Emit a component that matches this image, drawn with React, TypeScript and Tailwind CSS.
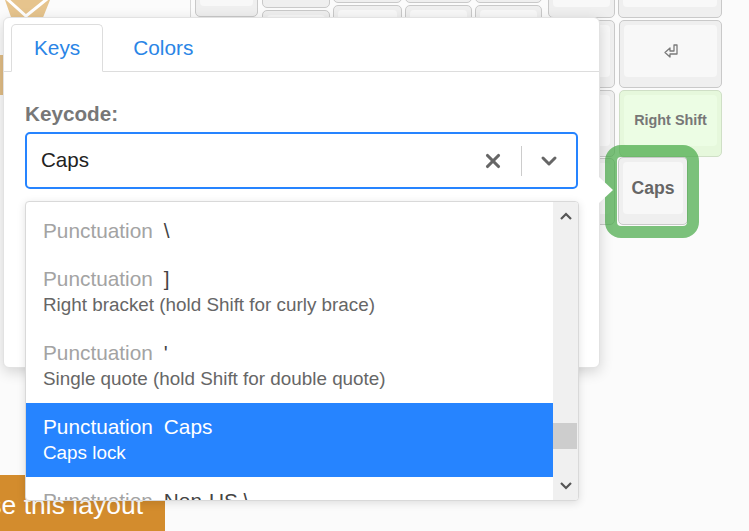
import { X, ChevronDown } from "lucide-react"

type Key = {
  x: number
  y: number
  w: number
  h: number
  label?: string
  kind?: "shift" | "caps" | "enter"
}

const keys: Key[] = [
  { x: 195, y: -50, w: 63, h: 67 },
  { x: 262, y: -59, w: 68, h: 67 },
  { x: 262, y: 10, w: 68, h: 67 },
  { x: 333, y: -64, w: 69, h: 67 },
  { x: 333, y: 5, w: 69, h: 67 },
  { x: 405, y: -64, w: 67, h: 67 },
  { x: 405, y: 5, w: 67, h: 67 },
  { x: 475, y: -64, w: 67, h: 67 },
  { x: 475, y: 5, w: 67, h: 67 },
  { x: 548, y: -49, w: 67, h: 67 },
  { x: 548, y: 20, w: 67, h: 68 },
  { x: 548, y: 90, w: 67, h: 67 },
  { x: 548, y: 158, w: 67, h: 67 },
  { x: 618, y: -49, w: 104, h: 67 },
  { x: 619, y: 20, w: 103, h: 68, kind: "enter" },
  { x: 619, y: 90, w: 103, h: 67, label: "Right Shift", kind: "shift" },
  { x: 618, y: 157, w: 70, h: 68, label: "Caps", kind: "caps" },
]

const options = [
  { title: "\\", desc: "", first: true },
  { title: "]", desc: "Right bracket (hold Shift for curly brace)" },
  { title: "'", desc: "Single quote (hold Shift for double quote)" },
  { title: "Caps", desc: "Caps lock", selected: true },
  { title: "Non-US \\", desc: "Non-US backslash" },
]

function KeyCap({ k }: { k: Key }) {
  const shift = k.kind === "shift"
  return (
    <div
      className={`absolute rounded-[5px] border ${shift ? "border-[#cfdfc6] bg-[#e6f8dc]" : "border-[#c9c9c9] bg-[#efefef]"}`}
      style={{ left: k.x, top: k.y, width: k.w, height: k.h }}
    >
      <div
        className={`absolute left-[4px] right-[4px] top-[4px] bottom-[10px] rounded-[4px] flex items-center justify-center ${shift ? "bg-[#ecfde4]" : "bg-[#f8f8f8]"}`}
      >
        {k.kind === "enter" && (
          <svg width="16" height="16" viewBox="0 0 16 16">
            <path
              d="M11 2 H14 V11 H7 V14 L2 9.5 L7 5 V8 H11 Z"
              fill="none"
              stroke="#7a7a7a"
              strokeWidth="1.3"
              strokeLinejoin="round"
            />
          </svg>
        )}
        {k.kind === "shift" && <span className="text-[14.4px] font-bold text-[#777]">{k.label}</span>}
        {k.kind === "caps" && <span className="text-[17.6px] font-bold text-[#666]">{k.label}</span>}
      </div>
    </div>
  )
}

export default function App() {
  return (
    <div
      className="relative flex h-[531px] w-[749px] flex-col overflow-hidden bg-[#fbfbfb]"
      style={{ fontFamily: '"Liberation Sans", Arial, sans-serif' }}
    >
      {/* keyboard canvas */}
      <div className="relative h-[475px] w-full shrink-0">
        <svg width="52" height="20" viewBox="0 0 52 20" className="absolute left-0 top-0">
          <polygon points="5,0 50,0 42,20 12,20" fill="#e6c48d" />
          <path d="M7 -1 L26 16 L47 -1" fill="none" stroke="#ffffff" strokeWidth="3" />
        </svg>
        <div className="absolute left-0 top-[55px] h-[40px] w-[3px] bg-[#e2be86]" />
        <div className="absolute left-[190px] top-0 h-[17px] w-px bg-[#d8d8d8]" />
        {keys.map((k, i) => (
          <KeyCap key={i} k={k} />
        ))}
        {/* highlight ring round the selected key */}
        <div className="absolute left-[605px] top-[145px] h-[93px] w-[94px] rounded-[16px] border-[12px] border-[rgba(74,170,74,0.72)]" />
      </div>

      <div className="flex h-[62px] w-[165px] shrink-0 items-center justify-end overflow-hidden bg-[#d38c2d] pr-[22px]">
        <span className="whitespace-nowrap text-[26.5px] text-white">Use this layout</span>
      </div>

      {/* popover */}
      <div className="absolute left-[3px] top-[17px] h-[351px] w-[597px] rounded-[6px] border border-[#e2e2e2] bg-white shadow-[0_4px_14px_rgba(0,0,0,0.16)]">
        <div className="absolute right-[-14px] top-[159px] h-0 w-0 border-y-[13px] border-l-[14px] border-y-transparent border-l-white" />

        <div className="flex gap-[8px] border-b border-[#dddddd] px-[7px] pt-[6px]">
          <div className="-mb-px flex h-[48px] items-center rounded-t-[5px] border border-b-white border-[#dddddd] bg-white px-[22px] text-[20.8px] text-[#2a85e6]">
            Keys
          </div>
          <div className="flex h-[47px] items-center px-[22px] text-[20.8px] text-[#2a85e6]">Colors</div>
        </div>

        <div className="px-[21px] pt-[30px]">
          <div className="text-[20.7px] font-bold leading-[24px] text-[#777]">Keycode:</div>

          <div className="relative mt-[6px]">
            <div className="flex h-[57px] items-center rounded-[5px] border-2 border-[#2684ff] bg-white pl-[14px]">
              <span className="flex-1 text-[20.6px] text-[#222]">Caps</span>
              <div className="flex w-[56px] items-center justify-center text-[#666]">
                <X size={22} strokeWidth={3.4} />
              </div>
              <div className="h-[30px] w-px bg-[#cccccc]" />
              <div className="flex w-[54px] items-center justify-center text-[#666]">
                <ChevronDown size={24} strokeWidth={3} />
              </div>
            </div>

            {/* dropdown menu */}
            <div className="absolute left-0 top-[69px] flex h-[300px] w-[554px] overflow-hidden rounded-[4px] border border-[#d9d9d9] bg-white shadow-[0_2px_8px_rgba(0,0,0,0.12)]">
              <div className="flex-1">
                {options.map((o, i) => (
                  <div
                    key={i}
                    className={`px-[17px] ${o.first ? "pt-[17px] pb-[12px]" : "pt-[12px] pb-[10px]"} ${o.selected ? "bg-[#2684ff]" : ""}`}
                  >
                    <div className="whitespace-nowrap text-[20.8px] leading-[24px]">
                      <span className={o.selected ? "text-white" : "text-[#a3a3a3]"}>Punctuation</span>
                      <span className={`ml-[11px] ${o.selected ? "text-white" : "text-[#444]"}`}>{o.title}</span>
                    </div>
                    {o.desc && (
                      <div className={`whitespace-nowrap text-[18.85px] leading-[28px] ${o.selected ? "text-white" : "text-[#666]"}`}>
                        {o.desc}
                      </div>
                    )}
                  </div>
                ))}
              </div>
              <div className="flex w-[25px] flex-col bg-[#f0f0f0]">
                <div className="flex h-[28px] items-center justify-center">
                  <svg width="12" height="8" viewBox="0 0 12 8">
                    <path d="M1 7 L6 2 L11 7" fill="none" stroke="#555" strokeWidth="2.2" />
                  </svg>
                </div>
                <div className="mt-[193px] h-[26px] w-[24px] bg-[#cdcdcd]" />
                <div className="mt-auto flex h-[28px] items-center justify-center">
                  <svg width="12" height="8" viewBox="0 0 12 8">
                    <path d="M1 1 L6 6 L11 1" fill="none" stroke="#555" strokeWidth="2.2" />
                  </svg>
                </div>
              </div>
            </div>
          </div>
        </div>
      </div>
    </div>
  )
}
